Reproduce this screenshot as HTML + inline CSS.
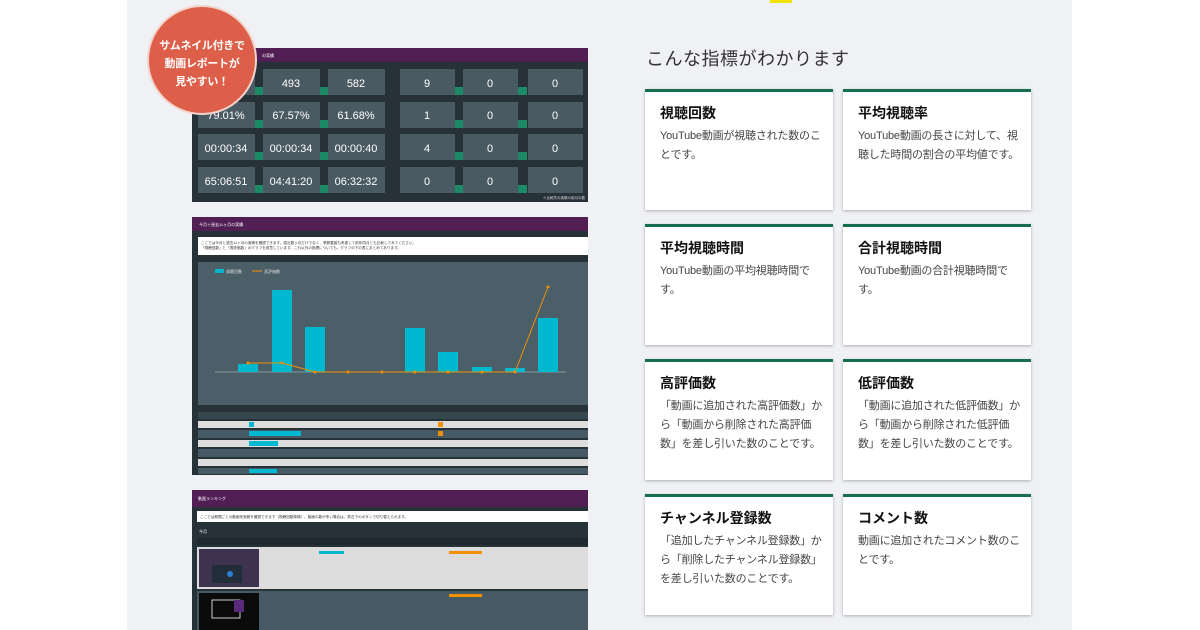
<!DOCTYPE html>
<html><head><meta charset="utf-8">
<style>
*{margin:0;padding:0;box-sizing:border-box}
body{width:1200px;height:630px;background:#fff;position:relative;overflow:hidden;font-family:"Liberation Sans","Noto Sans CJK JP",sans-serif}
.bg{position:absolute;left:127px;top:0;width:945px;height:630px;background:#f0f1f5}
.yb{position:absolute;left:770px;top:0;width:22px;height:3px;background:#f2e400}
h2{position:absolute;left:646px;top:45px;font-size:18px;font-weight:normal;color:#333;letter-spacing:.5px}
.card{position:absolute;width:188px;height:121px;background:#fff;border-top:3px solid #156f4f;box-shadow:0 1px 3px rgba(0,0,0,.28);padding:12px 10px 0 15px}
.card b{display:block;font-size:14px;color:#111;margin-bottom:5px;line-height:18px}
.card p{font-size:11px;color:#444;line-height:19px;letter-spacing:-.2px}
svg{position:absolute;left:0;top:0}
.badge{position:absolute;left:147px;top:5px;width:110px;height:110px;border-radius:50%;background:#dd5f49;border:2px solid #f3d4cc;color:#fff;font-weight:bold;font-size:11px;line-height:18px;text-align:center;padding-top:30px;letter-spacing:-.3px}
</style></head><body>
<div class="bg"></div><div class="yb"></div>
<svg width="1200" height="630" font-family="Liberation Sans, Noto Sans CJK JP, sans-serif">
<rect x="192" y="48" width="396" height="154" fill="#263238"/>
<rect x="192" y="48" width="396" height="14" fill="#521f55"/>
<text x="262" y="57" font-size="4" fill="#fff">の実績</text>
<g font-size="11" fill="#fff" text-anchor="middle">
<g id="r1">
<rect x="198" y="69" width="57" height="26" fill="#4a5a62"/><rect x="255" y="87" width="8" height="8" fill="#1d8a66"/>
<rect x="263" y="69" width="57" height="26" fill="#4a5a62"/><rect x="320" y="87" width="8" height="8" fill="#1d8a66"/>
<rect x="328" y="69" width="57" height="26" fill="#4a5a62"/>
<rect x="400" y="69" width="55" height="26" fill="#4a5a62"/><rect x="455" y="87" width="8" height="8" fill="#1d8a66"/>
<rect x="463" y="69" width="55" height="26" fill="#4a5a62"/><rect x="518" y="87" width="9" height="8" fill="#1d8a66"/>
<rect x="528" y="69" width="55" height="26" fill="#4a5a62"/>
</g>
<use href="#r1" y="33"/><use href="#r1" y="65"/><use href="#r1" y="98"/>
<text x="291" y="87">493</text><text x="356" y="87">582</text><text x="427" y="87">9</text><text x="490" y="87">0</text><text x="555" y="87">0</text>
<text x="226" y="119">79.01%</text><text x="291" y="119">67.57%</text><text x="356" y="119">61.68%</text><text x="427" y="119">1</text><text x="490" y="119">0</text><text x="555" y="119">0</text>
<text x="226" y="152">00:00:34</text><text x="291" y="152">00:00:34</text><text x="356" y="152">00:00:40</text><text x="427" y="152">4</text><text x="490" y="152">0</text><text x="555" y="152">0</text>
<text x="226" y="185">65:06:51</text><text x="291" y="185">04:41:20</text><text x="356" y="185">06:32:32</text><text x="427" y="185">0</text><text x="490" y="185">0</text><text x="555" y="185">0</text>
</g>
<text x="585" y="199" font-size="3.5" fill="#ddd" text-anchor="end">※比較先の実績の前月の数</text>
<rect x="192" y="217" width="396" height="258" fill="#263238"/>
<rect x="192" y="217" width="396" height="14" fill="#521f55"/>
<text x="199" y="226" font-size="4" fill="#fff">今月＋過去11ヶ月の実績</text>
<rect x="198" y="237" width="390" height="18" fill="#fff"/>
<text x="201" y="244" font-size="3.6" fill="#333">ここでは今月と過去11ヶ月の実績を確認できます。直近数ヶ月だけでなく、季節要因も考慮して前年同月とも比較してみてください。</text>
<text x="201" y="249" font-size="3.6" fill="#333">「視聴回数」と「高評価数」のグラフを用意しています。これ以外の指標についても、グラフの下の表にまとめてあります。</text>
<rect x="198" y="262" width="390" height="143" fill="#4b5f69"/>
<rect x="215" y="269" width="9" height="4" fill="#00b4cc"/><text x="226" y="273" font-size="4" fill="#ddd">視聴回数</text>
<line x1="252" y1="271" x2="262" y2="271" stroke="#f29100"/><text x="264" y="273" font-size="4" fill="#ddd">高評価数</text>
<line x1="215" y1="372" x2="566" y2="372" stroke="#9aa" stroke-width=".8"/>
<g fill="#00b8cf"><rect x="238" y="364" width="20" height="8"/><rect x="272" y="290" width="20" height="82"/><rect x="305" y="327" width="20" height="45"/><rect x="405" y="328" width="20" height="44"/><rect x="438" y="352" width="20" height="20"/><rect x="472" y="367" width="20" height="5"/><rect x="505" y="368" width="20" height="4"/><rect x="538" y="318" width="20" height="54"/></g>
<polyline points="248,363 282,363 315,372 515,372 548,287" fill="none" stroke="#f29100" stroke-width="1"/>
<g fill="#f29100"><circle cx="248" cy="363" r="1.5"/><circle cx="282" cy="363" r="1.5"/><circle cx="315" cy="372" r="1.5"/><circle cx="348" cy="372" r="1.5"/><circle cx="382" cy="372" r="1.5"/><circle cx="415" cy="372" r="1.5"/><circle cx="448" cy="372" r="1.5"/><circle cx="482" cy="372" r="1.5"/><circle cx="515" cy="372" r="1.5"/><circle cx="548" cy="287" r="1.5"/></g>
<rect x="198" y="412" width="390" height="7" fill="#37474f"/>
<g fill="#ddd"><rect x="198" y="421" width="390" height="7"/><rect x="198" y="440" width="390" height="7"/><rect x="198" y="459" width="390" height="7"/></g>
<g fill="#455a64"><rect x="198" y="430" width="390" height="8"/><rect x="198" y="449" width="390" height="8"/><rect x="198" y="468" width="390" height="6"/></g>
<g fill="#00b8cf"><rect x="249" y="422" width="5" height="5"/><rect x="249" y="431" width="52" height="5"/><rect x="249" y="441" width="29" height="5"/><rect x="249" y="469" width="28" height="4"/></g>
<g fill="#f29100"><rect x="438" y="422" width="5" height="5"/><rect x="438" y="431" width="5" height="5"/></g>
<rect x="192" y="490" width="396" height="140" fill="#263238"/>
<rect x="192" y="490" width="396" height="17" fill="#521f55"/>
<text x="198" y="500" font-size="4" fill="#fff">動画ランキング</text>
<rect x="197" y="511" width="391" height="11" fill="#fff"/>
<text x="200" y="518" font-size="3.6" fill="#333">ここでは期間ごとの動画別実績を確認できます（視聴回数降順）。動画の数が多い場合は、表右下のボタンで切り替えられます。</text>
<text x="199" y="533" font-size="4" fill="#fff">今月</text>
<rect x="197" y="538" width="391" height="7" fill="#1f2a30"/>
<rect x="197" y="547" width="391" height="42" fill="#dcdcdc"/>
<rect x="197" y="591" width="391" height="39" fill="#455a64"/>
<rect x="199" y="549" width="60" height="38" fill="#3d3350"/><rect x="212" y="565" width="30" height="18" fill="#222d3a"/><circle cx="230" cy="574" r="3" fill="#2a7fd6"/>
<rect x="199" y="593" width="60" height="37" fill="#0b0b0b"/><rect x="212" y="600" width="28" height="18" fill="none" stroke="#fff" stroke-width=".8"/><rect x="234" y="600" width="10" height="12" fill="#5a2a7a"/>
<rect x="319" y="551" width="25" height="3" fill="#00b8cf"/>
<g fill="#f29100"><rect x="449" y="551" width="33" height="3"/><rect x="449" y="594" width="33" height="3"/></g>
</svg>
<div class="badge">サムネイル付きで<br>動画レポートが<br>見やすい！</div>
<h2>こんな指標がわかります</h2>
<div class="card" style="left:645px;top:89px"><b>視聴回数</b><p>YouTube動画が視聴された数のことです。</p></div>
<div class="card" style="left:843px;top:89px"><b>平均視聴率</b><p>YouTube動画の長さに対して、視聴した時間の割合の平均値です。</p></div>
<div class="card" style="left:645px;top:224px"><b>平均視聴時間</b><p>YouTube動画の平均視聴時間です。</p></div>
<div class="card" style="left:843px;top:224px"><b>合計視聴時間</b><p>YouTube動画の合計視聴時間です。</p></div>
<div class="card" style="left:645px;top:359px"><b>高評価数</b><p>「動画に追加された高評価数」から「動画から削除された高評価数」を差し引いた数のことです。</p></div>
<div class="card" style="left:843px;top:359px"><b>低評価数</b><p>「動画に追加された低評価数」から「動画から削除された低評価数」を差し引いた数のことです。</p></div>
<div class="card" style="left:645px;top:494px"><b>チャンネル登録数</b><p>「追加したチャンネル登録数」から「削除したチャンネル登録数」を差し引いた数のことです。</p></div>
<div class="card" style="left:843px;top:494px"><b>コメント数</b><p>動画に追加されたコメント数のことです。</p></div>
</body></html>
